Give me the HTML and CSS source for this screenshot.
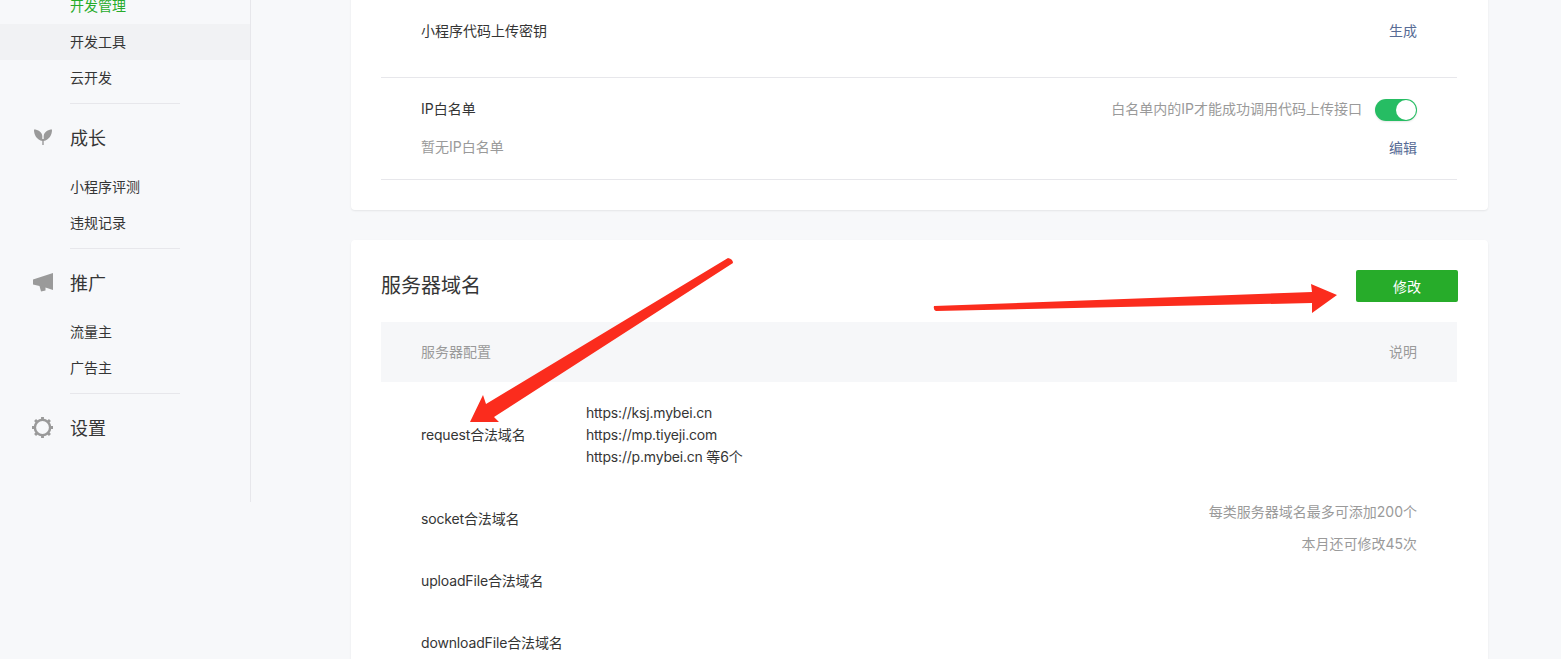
FILE: index.html
```html
<!DOCTYPE html>
<html lang="zh-CN">
<head>
    <meta charset="UTF-8">
    <meta name="viewport" content="width=device-width, initial-scale=1.0">
    <title>开发设置</title>
    <link rel="stylesheet" href="styles.css">
</head>
<body>
    <div class="page">
        <aside class="sidebar">
            <ul class="menu menu-first">
                <li class="menu-item current">开发管理</li>
                <li class="menu-item active">开发工具</li>
                <li class="menu-item">云开发</li>
            </ul>
            <div class="menu-group">
                <h3 class="menu-title">
                    <svg class="menu-icon" viewBox="0 0 20 20"><path d="M1 2.500C5 2.500 9 5 9.300 9V14C4 13 .8 8 1 2.500zM19 2.500C15 2.500 11 5 10.700 9V14C16 13 19.200 8 19 2.500zM9.300 12h1.400v6H9.300z"/></svg>
                    成长
                </h3>
                <ul class="menu">
                    <li class="menu-item">小程序评测</li>
                    <li class="menu-item">违规记录</li>
                </ul>
            </div>
            <div class="menu-group">
                <h3 class="menu-title">
                    <svg class="menu-icon" viewBox="0 0 20 20"><path d="M0 7.500 20 1V18L12.500 15.500V18.500L8 19.500 6.500 14 0 12.500z"/></svg>
                    推广
                </h3>
                <ul class="menu">
                    <li class="menu-item">流量主</li>
                    <li class="menu-item">广告主</li>
                </ul>
            </div>
            <div class="menu-group menu-group-last">
                <h3 class="menu-title">
                    <svg class="menu-icon" viewBox="0 0 22 22"><circle cx="11" cy="11" r="8" fill="none" stroke="#9a9a9a" stroke-width="2.600"/><g stroke="#9a9a9a" stroke-width="3"><path d="M11 0v3M11 19v3M0 11h3M19 11h3M3.200 3.200l2.100 2.100M16.700 16.700l2.100 2.100M3.200 18.800l2.100-2.100M16.700 5.300l2.100-2.100"/></g></svg>
                    设置
                </h3>
            </div>
        </aside>

        <main class="main">
            <section class="card card-top">
                <div class="row">
                    <div class="row-line">
                        <span>小程序代码上传密钥</span>
                        <a class="link">生成</a>
                    </div>
                </div>
                <div class="row row-ip">
                    <div class="row-line">
                        <span>IP白名单</span>
                        <div class="switch-wrap">
                            <span class="muted">白名单内的IP才能成功调用代码上传接口</span>
                            <span class="switch"><span class="switch-knob"></span></span>
                        </div>
                    </div>
                    <div class="row-line">
                        <span class="muted">暂无IP白名单</span>
                        <a class="link link-low">编辑</a>
                    </div>
                </div>
            </section>

            <section class="card">
                <div class="card-head">
                    <h2 class="card-title">服务器域名</h2>
                    <button class="btn-primary">修改</button>
                </div>
                <div class="table-head">
                    <span>服务器配置</span>
                    <span>说明</span>
                </div>
                <div class="table-body">
                    <div class="cell-label cell-request">request合法域名</div>
                    <div class="cell-domains">
                        <div>https://ksj.mybei.cn</div>
                        <div>https://mp.tiyeji.com</div>
                        <div>https://p.mybei.cn 等6个</div>
                    </div>
                    <div class="cell-note muted">
                        <div>每类服务器域名最多可添加200个</div>
                        <div>本月还可修改45次</div>
                    </div>
                    <div class="cell-label">socket合法域名</div>
                    <div class="cell-label">uploadFile合法域名</div>
                    <div class="cell-label">downloadFile合法域名</div>
                </div>
            </section>
        </main>
    </div>

    <svg class="marks" viewBox="0 0 1561 659">
        <path d="M934 306 1312 292 1311 284 1337 295 1312 313 1312 303 936 311Q933 310 934 306Z"/>
        <path d="M728 258Q733 259 733 263L494 417 499 422 470 422 483 395 486 404Z"/>
    </svg>
</body>
</html>
```

FILE: styles.css
```css
* { margin: 0; padding: 0; box-sizing: border-box; }
html, body { height: 659px; overflow: hidden; }
body { font-family: Inter, "Noto Sans CJK SC", sans-serif; font-size: 14px; color: #353535; background-color: #f7f8fa; }
ul { list-style: none; }

.page { display: flex; align-items: flex-start; }

.sidebar { width: 251px; height: 502px; flex-shrink: 0; border-right: 1px solid #e7e7eb; }
.menu-first { margin-top: -12px; }
.menu-item { height: 36px; line-height: 36px; padding-left: 70px; color: #353535; }
.menu-item.current { color: #27ac2a; }
.menu-item.active { background-color: #f1f2f4; }
.menu-group { position: relative; margin-top: 7px; }
.menu-group::before { content: ""; display: block; width: 110px; height: 1px; margin-left: 70px; background-color: #e7e7eb; }
.menu-title { display: flex; align-items: center; height: 36px; margin-top: 15px; margin-bottom: 14px; font-size: 18px; font-weight: normal; padding-left: 70px; }
.menu-icon { position: absolute; left: 33px; width: 20px; height: 20px; fill: #9a9a9a; }
.menu-group-last .menu-icon { left: 32px; width: 21px; height: 21px; }

.main { width: 1137px; margin-left: 100px; }
.card { padding: 0 31px 30px 30px; background-color: #fff; border-radius: 4px; box-shadow: 0 1px 2px rgba(0, 0, 0, 0.08); margin-bottom: 30px; }
.card-top { margin-top: -20px; padding-top: 20px; }

.row { padding: 20px 0 35px; border-bottom: 1px solid #e7e7eb; }
.row-ip { padding: 20px 0 21px; }
.row-ip .row-line + .row-line { margin-top: 16px; }
.row-line { display: flex; justify-content: space-between; align-items: center; height: 22px; padding: 0 40px; line-height: 22px; }
.muted { color: #9a9a9a; }
.link { color: #576b95; }
.link-low { margin-top: 2px; }
.switch-wrap { display: flex; align-items: center; gap: 13px; }
.switch { display: block; width: 42px; height: 22px; margin-top: 2px; padding: 1px; border-radius: 11px; background-color: #26bd63; box-shadow: 0 1px 2px rgba(0, 0, 0, 0.1); }
.switch-knob { display: block; width: 20px; height: 20px; margin-left: 20px; border-radius: 50%; background-color: #fff; }

.card-head { display: flex; justify-content: space-between; align-items: center; height: 82px; margin-right: -1px; padding-top: 30px; padding-bottom: 20px; }
.card-title { font-size: 20px; font-weight: normal; line-height: 30px; }
.btn-primary { width: 102px; height: 32px; border: none; border-radius: 2px; background-color: #27ac2a; color: #fff; font-family: inherit; font-size: 14px; }

.table-head { display: flex; justify-content: space-between; align-items: center; height: 60px; padding: 0 40px 2px; background-color: #f6f7f9; color: #9a9a9a; }

.table-body { display: grid; grid-template-columns: 165px 1fr auto; grid-template-rows: 106px 62px 62px 62px; padding: 0 40px; line-height: 22px; }
.cell-label { grid-column: 1; padding: 20px 0; letter-spacing: -0.15px; }
.cell-request { align-self: center; padding: 0; }
.cell-domains { grid-column: 2; align-self: center; letter-spacing: -0.2px; }
.cell-note { grid-column: 3; grid-row: 2 / span 3; margin-top: 8px; text-align: right; line-height: 32px; }

.marks { position: absolute; left: 0; top: 0; width: 1561px; height: 659px; fill: #fb2c1d; pointer-events: none; }
```
